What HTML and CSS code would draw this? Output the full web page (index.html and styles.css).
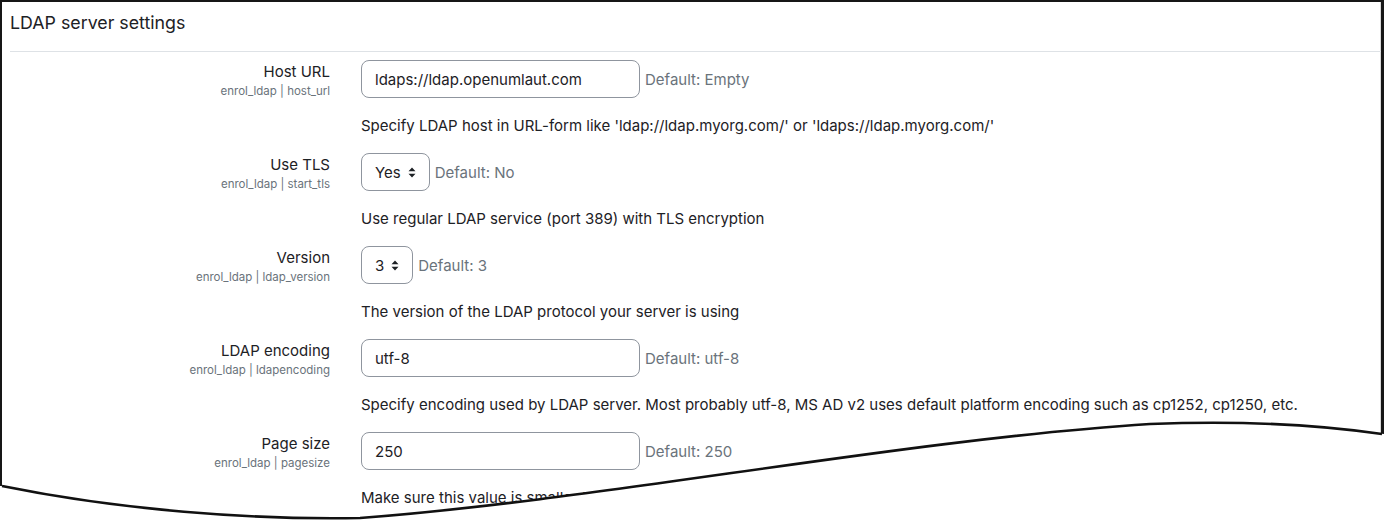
FILE: index.html
```html
<!DOCTYPE html>
<html lang="en">
<head>
<meta charset="utf-8">
<title>LDAP server settings</title>
<link rel="stylesheet" href="styles.css">
</head>
<body>
<div class="page">
  <section class="card">
    <h3 class="card-title">LDAP server settings</h3>
    <div class="divider"></div>

    <div class="setting">
      <div class="label-col">
        <div class="label">Host URL</div>
        <div class="key">enrol_ldap | host_url</div>
      </div>
      <div class="control-col">
        <div class="control-line">
          <div class="input wide">ldaps://ldap.openumlaut.com</div>
          <span class="default">Default: Empty</span>
        </div>
        <div class="desc">Specify LDAP host in URL-form like 'ldap://ldap.myorg.com/' or 'ldaps://ldap.myorg.com/'</div>
      </div>
    </div>

    <div class="setting">
      <div class="label-col">
        <div class="label">Use TLS</div>
        <div class="key">enrol_ldap | start_tls</div>
      </div>
      <div class="control-col">
        <div class="control-line">
          <div class="select">Yes
            <svg class="arrows" width="8" height="11" viewBox="0 0 8 11"><path d="M4 0.5 L7.5 4.2 L0.5 4.2 Z M4 10.5 L7.5 6.8 L0.5 6.8 Z" fill="#1d2125"/></svg>
          </div>
          <span class="default">Default: No</span>
        </div>
        <div class="desc">Use regular LDAP service (port 389) with TLS encryption</div>
      </div>
    </div>

    <div class="setting">
      <div class="label-col">
        <div class="label">Version</div>
        <div class="key">enrol_ldap | ldap_version</div>
      </div>
      <div class="control-col">
        <div class="control-line">
          <div class="select">3
            <svg class="arrows" width="8" height="11" viewBox="0 0 8 11"><path d="M4 0.5 L7.5 4.2 L0.5 4.2 Z M4 10.5 L7.5 6.8 L0.5 6.8 Z" fill="#1d2125"/></svg>
          </div>
          <span class="default">Default: 3</span>
        </div>
        <div class="desc">The version of the LDAP protocol your server is using</div>
      </div>
    </div>

    <div class="setting">
      <div class="label-col">
        <div class="label">LDAP encoding</div>
        <div class="key">enrol_ldap | ldapencoding</div>
      </div>
      <div class="control-col">
        <div class="control-line">
          <div class="input wide">utf-8</div>
          <span class="default">Default: utf-8</span>
        </div>
        <div class="desc">Specify encoding used by LDAP server. Most probably utf-8, MS AD v2 uses default platform encoding such as cp1252, cp1250, etc.</div>
      </div>
    </div>

    <div class="setting">
      <div class="label-col">
        <div class="label">Page size</div>
        <div class="key">enrol_ldap | pagesize</div>
      </div>
      <div class="control-col">
        <div class="control-line">
          <div class="input wide">250</div>
          <span class="default">Default: 250</span>
        </div>
        <div class="desc">Make sure this value is smaller than LDAP server result set size limit (the maximum number of entries that can be returned in a single query)</div>
      </div>
    </div>
  </section>

  <svg class="tear" width="1384" height="525" viewBox="0 0 1384 525">
    <path d="M0 486 L2 486 C120 510, 250 520, 360 518 C600 500, 900 440, 1150 424 C1250 420, 1320 425, 1384 434 L1384 525 L0 525 Z" fill="#ffffff"/>
    <path d="M2 486 C120 510, 250 520, 360 518 C600 500, 900 440, 1150 424 C1250 420, 1320 425, 1382 434" fill="none" stroke="#111111" stroke-width="2.6"/>
  </svg>
</div>
</body>
</html>
```

FILE: styles.css
```css
html, body {
  margin: 0;
  padding: 0;
  background: #ffffff;
  overflow: hidden;
}

.page {
  position: relative;
  width: 1384px;
  height: 525px;
  overflow: hidden;
  font-family: Inter, "Noto Sans", sans-serif;
  color: #1d2125;
}

.card {
  box-sizing: border-box;
  width: 1384px;
  height: 600px;
  border-top: 2px solid #161616;
  border-left: 2px solid #161616;
  border-right: 3px solid #161616;
  box-shadow: inset -1px 0 0 #d8d8d8;
}

.card-title {
  margin: 0;
  padding: 8px 0 0 8px;
  height: 41px;
  box-sizing: border-box;
  font-size: 17.8px;
  font-weight: 400;
  line-height: 26px;
}

.divider {
  height: 1px;
  background: #dee2e6;
  margin: 8px 0 8px 8px;
}

.setting {
  display: flex;
  gap: 31px;
  height: 93px;
}

.label-col {
  width: 328px;
  flex: none;
  text-align: right;
  padding-top: 1px;
}

.label {
  font-size: 15px;
  line-height: 22px;
}

.key {
  font-size: 11.5px;
  line-height: 16px;
  color: #6a737b;
}

.control-col {
  flex: 1;
}

.control-line {
  display: flex;
  align-items: center;
  gap: 5px;
  height: 38px;
}

.input, .select {
  box-sizing: border-box;
  height: 38px;
  border: 1px solid #8f959e;
  border-radius: 8px;
  padding: 0 13px;
  display: flex;
  align-items: center;
  font-size: 15px;
}

.input.wide {
  width: 279px;
}

.select {
  gap: 7px;
}

.arrows {
  display: block;
}

.default {
  font-size: 15px;
  color: #6a737b;
}

.desc {
  margin-top: 17px;
  font-size: 15px;
  line-height: 22px;
  white-space: nowrap;
}

.tear {
  position: absolute;
  left: 0;
  top: 0;
}
```
